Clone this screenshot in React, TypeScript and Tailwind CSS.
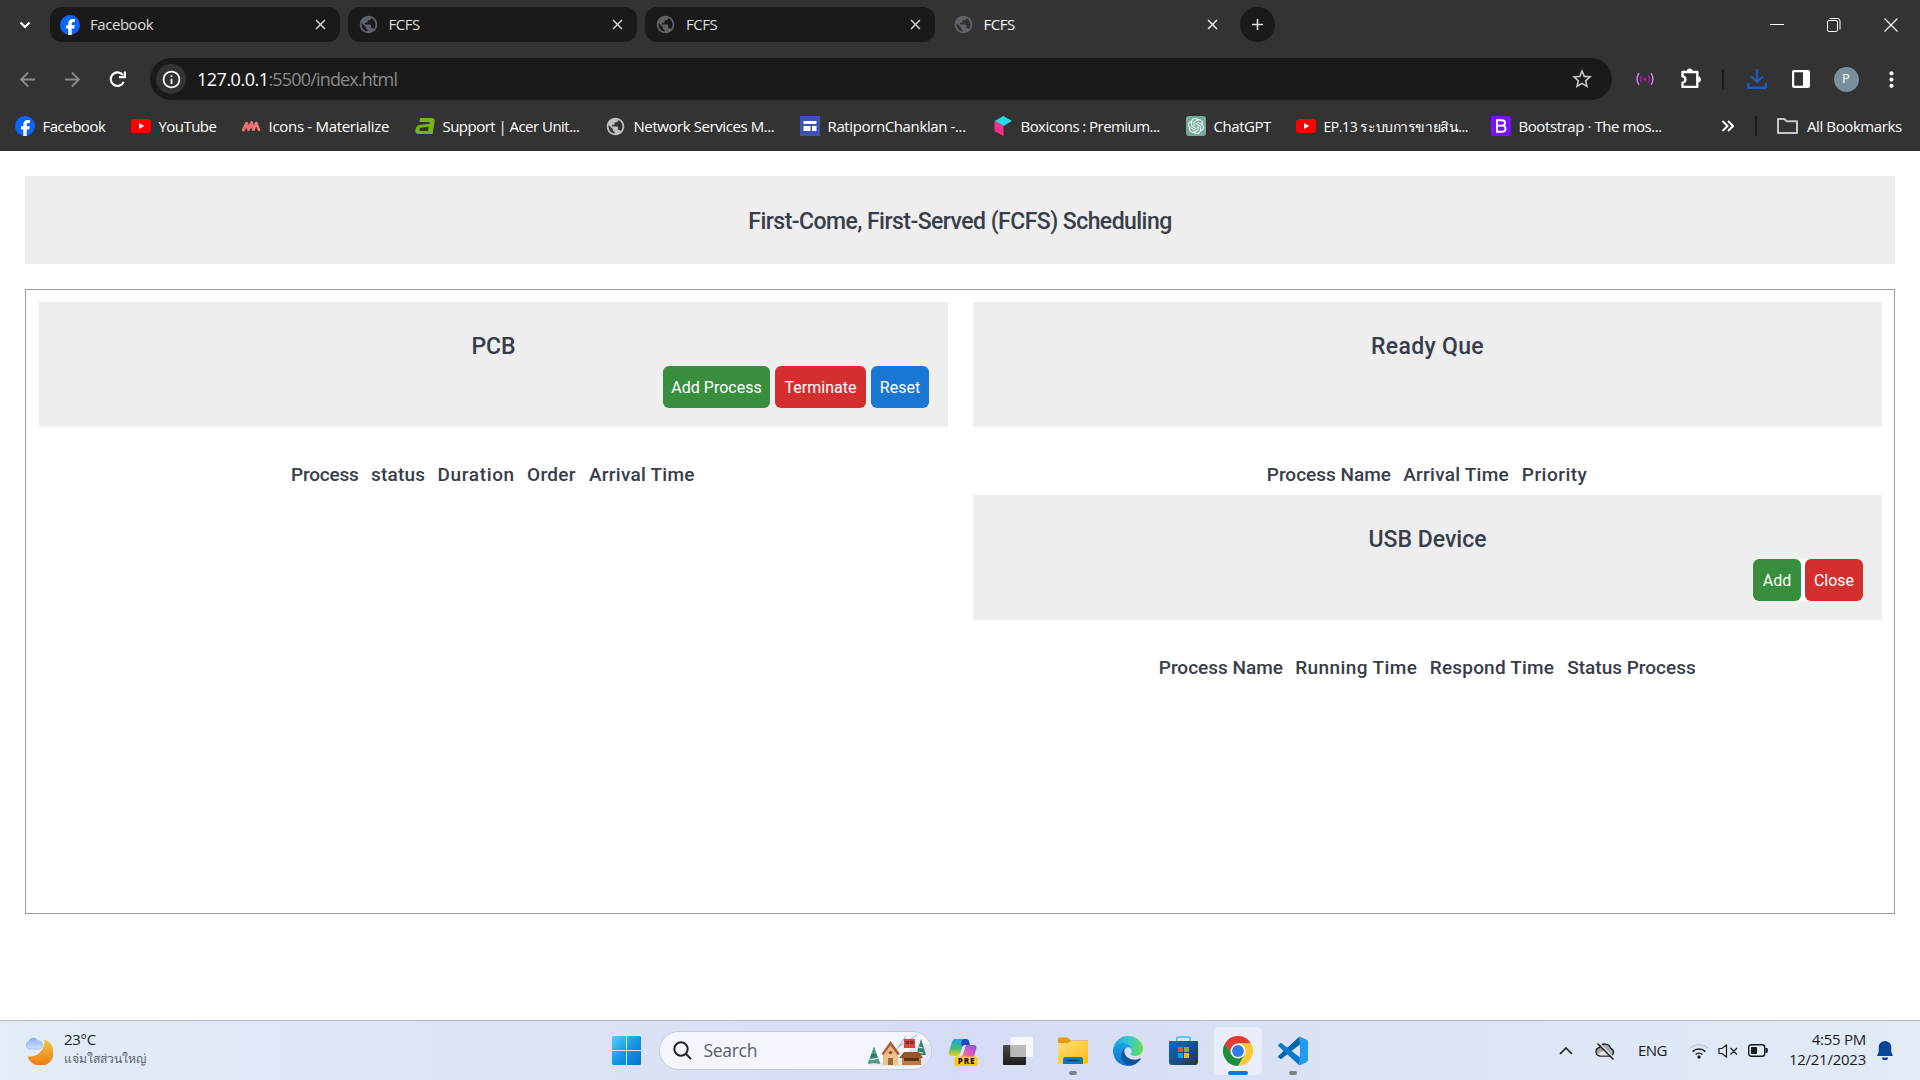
import React from "react";
import {
  MdPublic,
  MdStarOutline,
  MdArrowBack,
  MdArrowForward,
  MdOutlineInfo,
  MdMoreVert,
  MdClose,
  MdAdd,
} from "react-icons/md";
import { FaFacebook } from "react-icons/fa";
import { SiOpenai } from "react-icons/si";

/* ---------- small site icons ---------- */

const FacebookIcon = () => (
  <span className="flex size-5 items-center justify-center rounded-full bg-[#0866ff]">
    <svg viewBox="0 0 20 20" className="size-5">
      <path
        d="M8.300 20v-6.600H6.100v-3.100h2.200V8.700c0-3.300 1.500-4.800 4.600-4.800.6 0 1.600.1 2 .2v2.800h-1.100c-1.600 0-2.100.6-2.100 2v1.400h3.100l-.6 3.100h-2.500V20z"
        fill="#fff"
      />
    </svg>
  </span>
);

const YouTubeIcon = () => (
  <svg viewBox="0 0 20 20" className="size-5">
    <rect x="0" y="3" width="20" height="14" rx="3.600" fill="#f00" />
    <path d="M8 7l5.200 3L8 13z" fill="#fff" />
  </svg>
);

const MaterializeIcon = () => (
  <svg viewBox="0 0 20 20" className="size-5" fill="none" strokeLinecap="round" strokeLinejoin="round">
    <path d="M2.400 14L5.600 7.200 7.400 13.500 10.600 6.600 12.500 13.500" stroke="#ee6e73" strokeWidth="3" />
    <path d="M12.500 13.500L15.200 7l2.800 6.800" stroke="#ef7c80" strokeWidth="2.600" />
  </svg>
);

const AcerIcon = () => (
  <svg viewBox="0 0 20 20" className="size-5">
    <path
      d="M5.200 2h11.500c2.300 0 3.400 1.300 3 3.600L17.500 18H4.200C1 18 0 16.600.4 14.200c.5-3.300 2-5.100 5.800-5.500l8.500-.9c.3-1.300 0-1.800-1.300-1.800H4.400zM13.800 10.700l-7 .8c-1.700.2-2.200.9-2.400 2.100-.1.900.3 1.300 1.300 1.300H13z"
      fill="#77b41a"
    />
  </svg>
);

const GoogleSitesIcon = () => (
  <svg viewBox="0 0 20 20" className="size-5">
    <rect width="20" height="20" fill="#3f51b5" />
    <path d="M3.500 5h13v3h-13zM3.500 10h7v5h-7zM12 10h4.500v5H12z" fill="#fff" />
  </svg>
);

const BoxiconsIcon = () => (
  <svg viewBox="0 0 20 20" className="size-5">
    <path d="M1.500 5L10.500 0 19 5l-8.500 5z" fill="#24d8e6" />
    <path d="M1.500 5l9 5v10l-9-5z" fill="#ff2e8a" />
  </svg>
);

const ChatGPTIcon = () => (
  <span className="flex size-5 items-center justify-center rounded-[3px] bg-[#74aa9c]">
    <SiOpenai className="size-4 text-white" />
  </span>
);

const BootstrapIcon = () => (
  <svg viewBox="0 0 20 20" className="size-5">
    <rect width="20" height="20" rx="2" fill="#7a12f9" />
    <path
      d="M6 4.200h4.800c2.100 0 3.300 1 3.300 2.700 0 1.400-.8 2.300-2 2.700 1.600.3 2.400 1.400 2.400 2.900 0 2.100-1.400 3.300-3.800 3.300H6z"
      fill="none"
      stroke="#fff"
      strokeWidth="1.900"
    />
    <path d="M6 9.700h5.500" stroke="#fff" strokeWidth="1.900" />
  </svg>
);

/* ---------- browser chrome ---------- */

function Tab({ icon, title, active = false }: { icon: React.ReactNode; title: string; active?: boolean }) {
  return (
    <div
      className={`flex h-[35px] w-[289.5px] shrink-0 items-center rounded-[12px] pr-[11px] pl-2.5 ${
        active ? "text-[#f4f4f4]" : "bg-[#1a1a1a] text-[#dcdcdc]"
      }`}
    >
      {icon}
      <span className="ml-[10px] flex-1 text-[15px] tracking-[-0.45px]">{title}</span>
      <MdClose className="size-[17px]" />
    </div>
  );
}

const globe = <MdPublic className="size-[21px] text-[#5f6368]" />;

function TabStrip() {
  return (
    <div className="flex h-[49px] items-center">
      <svg viewBox="0 0 12 12" className="ml-[19px] size-3" fill="none" stroke="#fff" strokeWidth="2.200">
        <path d="M1.500 3.500L6 8l4.500-4.500" />
      </svg>
      <div className="ml-[19px] flex gap-2">
        <Tab icon={<FacebookIcon />} title="Facebook" />
        <Tab icon={globe} title="FCFS" />
        <Tab icon={globe} title="FCFS" />
        <Tab icon={globe} title="FCFS" active />
      </div>
      <div className="ml-[8px] flex size-[35px] items-center justify-center rounded-full bg-[#1a1a1a]">
        <MdAdd className="size-[19px] text-[#e3e3e3]" />
      </div>
      <div className="mr-[22px] ml-auto flex items-center gap-[43px]">
        <span className="h-px w-3.5 bg-white" />
        <svg viewBox="0 0 14 14" className="size-3.5" fill="none" stroke="#fff">
          <rect x="0.500" y="2.500" width="10" height="11" rx="1.500" />
          <path d="M2.500.5h8a2.500 2.500 0 012.500 2.500v8.500" />
        </svg>
        <svg viewBox="0 0 14 14" className="size-3.5" stroke="#fff" strokeWidth="1.100">
          <path d="M.5.5l13 13M13.500.5l-13 13" />
        </svg>
      </div>
    </div>
  );
}

function Toolbar() {
  return (
    <div className="flex h-[60px] items-center pl-[16px] text-white">
      <MdArrowBack className="size-[23px] text-[#8a8a8a]" />
      <MdArrowForward className="ml-[22px] size-[23px] text-[#8a8a8a]" />
      <svg viewBox="0 0 18 18" className="mr-[24px] ml-[25px] size-[17px]" fill="none" stroke="#fff" strokeWidth="2.300">
        <path d="M15.600 11.500A7.200 7.200 0 1114.800 4.300" />
        <path d="M16.800.5v6h-6.300" />
      </svg>
      <div className="flex h-[42px] w-[1462px] items-center rounded-full bg-[#1a1a1a] pr-[18px] pl-[6px]">
        <span className="flex size-[30px] items-center justify-center rounded-full bg-[#333]">
          <MdOutlineInfo className="size-[21px]" />
        </span>
        <span className="ml-[11px] flex-1 text-[18px] tracking-[-0.83px] text-[#8a8a8a]">
          <span className="tracking-[-0.5px] text-white">127.0.0.1</span>:5500/index.html
        </span>
        <MdStarOutline className="size-6 text-[#c7c7c7]" />
      </div>
      <svg viewBox="0 0 18 18" className="ml-[24px] size-[18px]" fill="none" strokeWidth="1.500">
        <circle cx="9" cy="9" r="1.700" fill="#a21caf" />
        <path d="M6 5.500c-1.700 2-1.700 5 0 7M12 5.500c1.700 2 1.700 5 0 7" stroke="#a21caf" />
        <path d="M3 3.200C.6 6.700.6 11.300 3 14.800M15 3.200c2.400 3.500 2.400 8.100 0 11.600" stroke="#d07fe0" />
      </svg>
      <svg viewBox="0 0 22 22" className="ml-[26px] h-[22px] w-[22px]">
        <path
          d="M2.500 4h14.800v14.900H2.500v-4.300l1.600-.6c1.700-.8 1.700-4.300 0-5.100l-1.600-.6z"
          fill="none"
          stroke="#fff"
          strokeWidth="2.400"
          strokeLinejoin="round"
        />
        <path d="M6.800 3.500a2.900 2.900 0 015.800 0zM18 8.600a2.900 2.900 0 010 5.800z" fill="#fff" />
      </svg>
      <span className="ml-[20px] h-5 w-0.5 rounded bg-[#1a1a1a]" />
      <svg
        viewBox="0 0 20 20"
        className="ml-[22.500px] size-5"
        fill="none"
        stroke="#1f5cb8"
        strokeWidth="2.400"
        strokeLinejoin="round"
      >
        <path d="M10 0v12.500M4.300 7.500l5.700 5.500 5.700-5.500M1.200 14v4.800h17.600V14" />
      </svg>
      <svg viewBox="0 0 18 18" className="ml-[25px] size-[18px]">
        <rect x="1.100" y="1.100" width="15.800" height="15.800" rx="1" fill="none" stroke="#fff" strokeWidth="2.200" />
        <path d="M11 1h6v16h-6z" fill="#fff" />
      </svg>
      <span className="ml-[24px] flex size-[25px] items-center justify-center rounded-full bg-[#78909c] text-[13px]">
        P
      </span>
      <MdMoreVert className="ml-[20px] size-[25px]" />
    </div>
  );
}

const bookmarks = [
  { icon: <FacebookIcon />, label: "Facebook", box: "w-[116px]", text: "tracking-[-0.5px]" },
  { icon: <YouTubeIcon />, label: "YouTube", box: "w-[110px]", text: "tracking-[-0.55px]" },
  { icon: <MaterializeIcon />, label: "Icons - Materialize", box: "w-[174px]", text: "tracking-[-0.3px]" },
  { icon: <AcerIcon />, label: "Support | Acer Unit...", box: "w-[190px]", text: "tracking-[-0.53px]" },
  {
    icon: <MdPublic className="size-[21px] text-[#bdc1c6]" />,
    label: "Network Services M...",
    box: "w-[195px]",
    text: "tracking-[-0.42px]",
  },
  { icon: <GoogleSitesIcon />, label: "RatipornChanklan -...", box: "w-[193px]", text: "tracking-[-0.38px]" },
  { icon: <BoxiconsIcon />, label: "Boxicons : Premium...", box: "w-[193px]", text: "tracking-[-0.55px]" },
  { icon: <ChatGPTIcon />, label: "ChatGPT", box: "w-[110px]", text: "tracking-[-0.45px]" },
  { icon: <YouTubeIcon />, label: "EP.13 ระบบการขายสิน...", box: "w-[195px]", text: "text-[14px] tracking-[-0.43px]" },
  { icon: <BootstrapIcon />, label: "Bootstrap · The mos...", box: "w-[230px]", text: "tracking-[-0.42px]" },
];

function BookmarksBar() {
  return (
    <div className="flex h-[42px] items-center pb-[8px] pl-[15px] text-[15px] whitespace-nowrap text-white">
      {bookmarks.map((b) => (
        <div key={b.label} className={`flex shrink-0 items-center gap-[7.500px] ${b.box}`}>
          <span className="shrink-0">{b.icon}</span>
          <span className={b.text}>{b.label}</span>
        </div>
      ))}
      <svg viewBox="0 0 13 12" className="h-3 w-[13px]" fill="none" stroke="#fff" strokeWidth="2">
        <path d="M1.500 1l5 5-5 5M7 1l5 5-5 5" />
      </svg>
      <span className="ml-[21px] h-5 w-0.5 bg-[#1a1a1a]" />
      <svg
        viewBox="0 0 21 16"
        className="ml-[20px] h-4 w-[21px]"
        fill="none"
        stroke="#c7c7c7"
        strokeWidth="2"
        strokeLinejoin="round"
      >
        <path d="M1 1h6.500l2 2.200H20V15H1z" />
      </svg>
      <span className="ml-[9px] tracking-[-0.4px]">All Bookmarks</span>
    </div>
  );
}

/* ---------- FCFS page ---------- */

function ActionButton({ label, className }: { label: string; className: string }) {
  return (
    <button
      className={`h-[42px] rounded-[6px] pt-0.5 text-center text-[16px] font-normal whitespace-nowrap text-white ${className}`}
    >
      {label}
    </button>
  );
}

function PanelHeader({ title, className = "", children }: { title: string; className?: string; children?: React.ReactNode }) {
  return (
    <div className="flex h-[125px] flex-col bg-[#eee] px-[19px] pt-[30px]">
      <h2 className={`text-center text-[23px] leading-[30px] font-medium ${className}`}>{title}</h2>
      <div className="mt-1 flex justify-end">{children}</div>
    </div>
  );
}

type Column = { label: string; className: string };

function HeaderRow({ columns }: { columns: Column[] }) {
  return (
    <div className="mt-[33px] flex justify-center gap-[12.500px] pr-px text-[19px] leading-[30px] font-medium whitespace-nowrap">
      {columns.map((c) => (
        <span key={c.label} className={c.className}>
          {c.label}
        </span>
      ))}
    </div>
  );
}

const pcbColumns: Column[] = [
  { label: "Process", className: "w-[67.500px] tracking-[-0.2px]" },
  { label: "status", className: "w-[54px] tracking-[0.2px]" },
  { label: "Duration", className: "w-[77px] tracking-[0.65px]" },
  { label: "Order", className: "w-[49.500px] tracking-[0.3px]" },
  { label: "Arrival Time", className: "w-[106px] tracking-[0.25px]" },
];

const readyColumns: Column[] = [
  { label: "Process Name", className: "w-[124px]" },
  { label: "Arrival Time", className: "w-[106px] tracking-[0.25px]" },
  { label: "Priority", className: "w-[65.500px] tracking-[0.5px]" },
];

const usbColumns: Column[] = [
  { label: "Process Name", className: "w-[124px]" },
  { label: "Running Time", className: "w-[122px] tracking-[0.4px]" },
  { label: "Respond Time", className: "w-[125px] tracking-[0.2px]" },
  { label: "Status Process", className: "w-[128px]" },
];

function SchedulerPage() {
  return (
    <main className="h-[869px] bg-white px-[25px] pt-[25px] font-['Roboto',sans-serif] text-[#373d49]">
      <header className="flex h-[88px] items-center justify-center bg-[#eee] pt-1">
        <h1 className="text-[23px] font-medium tracking-[-0.55px]">First-Come, First-Served (FCFS) Scheduling</h1>
      </header>
      <section className="mt-[25px] grid h-[625px] grid-cols-2 content-start gap-[25px] border border-[#9e9e9e] p-3 pl-[13px]">
        <div>
          <PanelHeader title="PCB">
            <ActionButton label="Add Process" className="w-[107px] bg-[#388e3c]" />
            <ActionButton label="Terminate" className="ml-[5px] w-[91px] bg-[#d32f2f]" />
            <ActionButton label="Reset" className="ml-[5px] w-[58px] bg-[#1976d2]" />
          </PanelHeader>
          <HeaderRow columns={pcbColumns} />
        </div>
        <div>
          <PanelHeader title="Ready Que" className="tracking-[0.3px]" />
          <HeaderRow columns={readyColumns} />
          <div className="mt-[5px]">
            <PanelHeader title="USB Device">
              <div className="flex bg-white">
                <ActionButton label="Add" className="w-[48px] bg-[#388e3c]" />
                <ActionButton label="Close" className="ml-[4px] w-[58px] bg-[#d32f2f]" />
              </div>
            </PanelHeader>
          </div>
          <HeaderRow columns={usbColumns} />
        </div>
      </section>
    </main>
  );
}

/* ---------- taskbar ---------- */

const WeatherIcon = () => (
  <svg viewBox="0 0 28 28" className="size-7">
    <defs>
      <linearGradient id="moon" x1="0" y1="0" x2="0" y2="1">
        <stop offset="0" stopColor="#f5c43c" />
        <stop offset="1" stopColor="#ee7a16" />
      </linearGradient>
      <linearGradient id="cloud" x1="0" y1="0" x2="0" y2="1">
        <stop offset="0" stopColor="#8fb2ee" />
        <stop offset="1" stopColor="#cfe0fb" />
      </linearGradient>
    </defs>
    <path d="M19.500 2.500A13.500 13.500 0 112.500 19.500C12 20.500 20 14 19.500 2.500z" fill="url(#moon)" />
    <path
      d="M4 12a4 4 0 01-.3-7.500 5 5 0 019.200-.8A4.200 4.200 0 0114 12z"
      fill="url(#cloud)"
      stroke="#86a9e6"
      strokeWidth=".6"
    />
  </svg>
);

const StartIcon = () => (
  <svg viewBox="0 0 29 29" className="size-[29px]">
    <defs>
      <linearGradient id="win" x1="0" y1="0" x2="1" y2="1">
        <stop offset="0" stopColor="#52d2fb" />
        <stop offset=".5" stopColor="#1797e3" />
        <stop offset="1" stopColor="#0571d0" />
      </linearGradient>
    </defs>
    <path d="M1 0h13v14H0V1zM15 0h13l1 1v13H15zM0 15h14v14H1l-1-1zM15 15h14v13l-1 1H15z" fill="url(#win)" />
  </svg>
);

const VillageArt = () => (
  <svg viewBox="0 0 64 38" className="h-[38px] w-16">
    <path d="M2 33c12-4 18-2 28-4 12-12 20-17 34-17v20c-6 3-50 3-62 1z" fill="#e3e5f1" />
    <path d="M28 20L39 4M33 14L50 3" stroke="#8b93a8" strokeWidth=".8" />
    <path d="M7 15l6 16H1z" fill="#2f7d64" />
    <path d="M7 15l2.500 7h-5zM3 27l4-2 4 2 2 5c-4-1-8-1-12 0z" fill="#4f9e80" />
    <path d="M2.500 27c3 1 6 0 8.500-1" stroke="#e8f4f4" strokeWidth="1.300" fill="none" />
    <path d="M54 7l5 16H49z" fill="#37806b" />
    <path d="M51.500 15l4 1M50 20l6 1" stroke="#e8f4f4" strokeWidth="1.200" />
    <path d="M16 20h15v13H16z" fill="#ecc487" />
    <path d="M14.500 22L23.500 9 33 22l-2.500 1-7-9-7 9z" fill="#b0563f" />
    <path d="M23.500 13.500l6.500 9H17z" fill="#e9b877" />
    <path d="M21 26h5v7h-5z" fill="#9c6a3a" />
    <circle cx="23.500" cy="20.500" r="1.600" fill="#7b4b2f" />
    <path d="M37 7h11v9H37z" fill="#d94637" />
    <path d="M38.500 9H42v3h-3.500zM43 9h3.500v3H43z" fill="#7c2f33" />
    <path d="M35 25h19v8H35z" fill="#c17c3d" />
    <path d="M32 26l5-6h15l4 6z" fill="#96562b" />
    <path d="M37 26h15v3H37z" fill="#5d321c" />
  </svg>
);

const CopilotIcon = () => (
  <svg viewBox="0 0 30 30" className="size-[30px]">
    <defs>
      <linearGradient id="copA" x1="0" y1="0" x2="0" y2="1">
        <stop offset="0" stopColor="#1ba4ee" />
        <stop offset=".55" stopColor="#3ebd7a" />
        <stop offset="1" stopColor="#f5d21c" />
      </linearGradient>
      <linearGradient id="copB" x1="1" y1="0" x2="0" y2="1">
        <stop offset="0" stopColor="#8a4df0" />
        <stop offset=".5" stopColor="#d35bc4" />
        <stop offset="1" stopColor="#fb8a5c" />
      </linearGradient>
    </defs>
    <path d="M7 3h12l-3 7-5 10H3c-2 0-3-1.500-2-4L4 6c.7-2 1.500-3 3-3z" fill="url(#copA)" />
    <path d="M16 3h2c2 0 2.800 1 3.200 3L22 9h-4c-2 0-3 .5-3.500 2L13 8c.6-2 .8-5 3-5z" fill="#174ec4" />
    <path d="M18 9h8c2 0 2.800 1.500 2.200 4l-1.700 6c-.5 1.500-1 2-2.500 2H12c2 0 2.500-1 3-2.500l2.500-8z" fill="url(#copB)" />
    <path d="M14.500 10.500c.5-1 1.500-1.500 3-1.500L14 19c-.5 1-1 1.500-2.500 1.500z" fill="#e4e0f8" />
    <rect x="6.500" y="20.500" width="23" height="9.500" rx="2" fill="#ffc90e" />
    <text x="9.800" y="28.200" fontFamily="Open Sans" fontSize="8" fontWeight="800" textLength="16.500" fill="#1b1b1b">
      PRE
    </text>
  </svg>
);

const TaskViewIcon = () => (
  <svg viewBox="0 0 30 28" className="h-7 w-[30px]">
    <defs>
      <linearGradient id="tv" x1="0" y1="0" x2="0" y2="1">
        <stop offset="0" stopColor="#4a4a4a" />
        <stop offset="1" stopColor="#1c1c1c" />
      </linearGradient>
    </defs>
    <rect x="0" y="8" width="23" height="20" rx="1" fill="url(#tv)" />
    <rect x="7.500" y="0" width="22.500" height="20" rx="1" fill="#fff" fillOpacity=".8" />
    <path d="M7.500 8H23v12H7.500z" fill="#b9b9b9" />
  </svg>
);

const ExplorerIcon = () => (
  <svg viewBox="0 0 30 28" className="h-7 w-[30px]">
    <defs>
      <linearGradient id="folder" x1="0" y1="0" x2="1" y2="1">
        <stop offset="0" stopColor="#ffe07a" />
        <stop offset="1" stopColor="#fbb915" />
      </linearGradient>
    </defs>
    <path d="M0 2C0 1 .7.500 1.500.500h8L13 3.500h16c.7 0 1 .5 1 1V10H0z" fill="#dfa00f" />
    <path d="M0 6h10l3-2h17v21c0 1-.5 1.500-1.500 1.500h-27C.5 26.500 0 26 0 25z" fill="url(#folder)" />
    <path d="M5 27v-4.500C5 21 6 20 7.500 20h15c1.500 0 2.500 1 2.500 2.500V27z" fill="#0f74c8" />
    <path d="M9 23.500h12" stroke="#083f77" strokeWidth="1.400" strokeLinecap="round" />
  </svg>
);

const EdgeIcon = () => (
  <svg viewBox="0 0 256 256" className="size-[30px]">
    <defs>
      <linearGradient id="e1" x1=".2" y1=".7" x2="1" y2=".7">
        <stop offset="0" stopColor="#0c59a4" />
        <stop offset="1" stopColor="#114a8b" />
      </linearGradient>
      <linearGradient id="e2" x1=".6" y1=".2" x2=".3" y2="1">
        <stop offset="0" stopColor="#1b9de2" />
        <stop offset="1" stopColor="#0a78cf" />
      </linearGradient>
      <linearGradient id="e3" x1="0" y1=".4" x2="1" y2=".5">
        <stop offset="0" stopColor="#2aa7e6" />
        <stop offset=".5" stopColor="#35c6d4" />
        <stop offset="1" stopColor="#66e04f" />
      </linearGradient>
    </defs>
    <path
      d="M231 190.500c-3.400 1.800-6.900 3.300-10.500 4.700a101.700 101.700 0 01-35.900 6.400c-47.300 0-88.500-32.500-88.500-74.300a31.500 31.500 0 0116.400-27.300c-42.800 1.800-53.800 46.400-53.800 72.500 0 73.900 68.100 81.400 82.800 81.400 7.900 0 19.800-2.300 27-4.600l1.300-.4a128.300 128.300 0 0066.600-52.800 4 4 0 00-5.400-5.600z"
      fill="url(#e1)"
    />
    <path
      d="M105.700 241.400a79.200 79.200 0 01-22.700-21.300 80.700 80.700 0 0129.500-120c3.200-1.500 8.500-4.100 15.600-4a32.400 32.400 0 0125.700 13 31.900 31.900 0 016.300 18.700c0-.2 24.500-79.600-80-79.600-43.900 0-80 41.700-80 78.200a130.200 130.200 0 0012.100 56 128 128 0 00156.400 67 75.500 75.500 0 01-62.800-8z"
      fill="url(#e2)"
    />
    <path
      d="M152.300 148.900c-.9 1-3.400 2.500-3.400 5.600 0 2.600 1.700 5.200 4.800 7.300 14.300 10 41.400 8.600 41.500 8.600a59.600 59.600 0 0030.300-8.300 61.400 61.400 0 0030.400-52.900c.3-22.400-8-37.300-11.300-43.900C223.500 23.900 177.700 0 128 0A128 128 0 000 126.200c.5-36.500 36.800-66 80-66 3.500 0 23.500.3 42 10a72.600 72.600 0 0130.900 29.300c6.100 10.600 7.200 24.100 7.200 29.500 0 5.400-2.700 13.300-7.800 19.900z"
      fill="url(#e3)"
    />
  </svg>
);

const StoreIcon = () => (
  <svg viewBox="0 0 29 29" className="size-[29px]">
    <defs>
      <linearGradient id="store" x1="0" y1="0" x2="1" y2="1">
        <stop offset="0" stopColor="#0a6cc4" />
        <stop offset="1" stopColor="#243454" />
      </linearGradient>
    </defs>
    <path
      d="M7.800 6V2.500c0-1 .6-1.500 1.500-1.500h10.400c.9 0 1.500.5 1.500 1.500V6"
      fill="none"
      stroke="#35c1f1"
      strokeWidth="1.600"
    />
    <path d="M0 5h29v21a3 3 0 01-3 3H3a3 3 0 01-3-3z" fill="url(#store)" />
    <path d="M9 11h5v5H9z" fill="#f25022" />
    <path d="M15 11h5v5h-5z" fill="#7fba00" />
    <path d="M9 17h5v5H9z" fill="#00a4ef" />
    <path d="M15 17h5v5h-5z" fill="#ffb900" />
  </svg>
);

const ChromeIcon = () => (
  <svg viewBox="0 0 48 48" className="size-[30px]">
    <path d="M24 12h20.800A24 24 0 003.200 12l10.400 18z" fill="#e33b2e" />
    <path d="M34.400 30L24 48A24 24 0 0044.800 12H24z" fill="#fcc934" />
    <path d="M13.600 30L3.200 12A24 24 0 0024 48l10.400-18z" fill="#1e8e3e" />
    <circle cx="24" cy="24" r="12" fill="#fff" />
    <circle cx="24" cy="24" r="9.500" fill="#2f7de9" />
  </svg>
);

const VSCodeIcon = () => (
  <svg viewBox="0 0 30 30" className="size-[30px]">
    <path d="M22 8.500L3.500 22.800c-.5.400-1 .4-1.500 0L.5 21.500c-.5-.5-.5-1.200 0-1.700L21.500.6z" fill="#0065a9" />
    <path d="M22 21.500L3.500 7.200c-.5-.4-1-.4-1.500 0L.5 8.500c-.5.500-.5 1.200 0 1.700l21 19.200z" fill="#007acc" />
    <path
      d="M21.500 29.500c-.6.300-1.200.2-1.700-.3 1 .9 2.200.3 2.200-.9V1.700c0-1.200-1.400-1.800-2.200-.9.500-.5 1.100-.6 1.700-.3l7.200 3.300c.8.400 1.300 1 1.300 1.900v18.600c0 .8-.5 1.500-1.300 1.900z"
      fill="#1f9cf0"
    />
  </svg>
);

function TaskItem({ children, state }: { children: React.ReactNode; state?: "open" | "active" }) {
  return (
    <div
      className={`relative flex size-12 items-center justify-center rounded-[5px] ${
        state === "active" ? "bg-[#eaeefa]" : ""
      }`}
    >
      {children}
      {state === "open" && <span className="absolute bottom-0 h-1 w-2 rounded-full bg-[#7d8088]" />}
      {state === "active" && <span className="absolute bottom-0 h-1 w-5 rounded-full bg-[#0a7ad8]" />}
    </div>
  );
}

function SystemTray() {
  return (
    <div className="ml-auto flex items-center text-[#1b1b1b]">
      <svg viewBox="0 0 14 8" className="h-2 w-3.5" fill="none" stroke="#1b1b1b" strokeWidth="1.600">
        <path d="M1 7l6-6 6 6" />
      </svg>
      <svg viewBox="0 0 20 18" className="ml-[22px] h-[18px] w-5">
        <path
          d="M5 14a4.300 4.300 0 01-.5-8.500 6 6 0 0111.200.8A4 4 0 0115.500 14z"
          fill="#a6a8ab"
          stroke="#1b1b1b"
          strokeWidth="1.300"
        />
        <path d="M2.500 12L9 8.500l8 4-1.500 1H5z" fill="#e6e8ea" />
        <path d="M3.500.5l16 16" stroke="#e3ecf7" strokeWidth="1.500" />
        <path d="M2.500 1.500l16 16" stroke="#1b1b1b" strokeWidth="1.500" />
      </svg>
      <span className="ml-[23px] w-[29px] text-[15px] tracking-[-0.6px]">ENG</span>
      <svg viewBox="0 0 20 16" className="ml-[22px] h-4 w-5" fill="none" strokeWidth="1.500">
        <path d="M.8 5.500a13 13 0 0118.400 0" stroke="#c3ccd6" />
        <path d="M3.600 8.600a9 9 0 0112.800 0M6.600 11.500a4.900 4.900 0 016.800 0" stroke="#1b1b1b" />
        <circle cx="10" cy="14" r="1.700" fill="#1b1b1b" />
      </svg>
      <svg viewBox="0 0 20 14" className="ml-[9px] h-3.5 w-5" fill="none" stroke="#1b1b1b" strokeWidth="1.200">
        <path d="M1 4.500h3L8.500 1v12L4 9.500H1zM12.500 4l6.500 6.500M19 4l-6.500 6.500" />
      </svg>
      <svg viewBox="0 0 20 13" className="ml-[10px] h-[13px] w-5">
        <rect x=".7" y=".7" width="16" height="11.600" rx="2.500" fill="none" stroke="#1b1b1b" strokeWidth="1.400" />
        <rect x="3" y="3" width="6" height="7" rx=".8" fill="#1b1b1b" />
        <path d="M17.500 4h1c.8 0 1.300.5 1.300 1.200v2.600c0 .7-.5 1.200-1.300 1.200h-1z" fill="#1b1b1b" />
      </svg>
      <div className="ml-[11px] w-[87px] pb-1 text-right text-[15px] leading-5 tracking-[-0.25px] whitespace-nowrap">
        <div>4:55 PM</div>
        <div>12/21/2023</div>
      </div>
      <svg viewBox="0 0 16 19" className="mr-[27px] ml-[11px] h-[19px] w-4" fill="#0a4595">
        <path d="M8 0a6.300 6.300 0 016.300 6.300V11l1.500 3.200c.2.500 0 .8-.5.800H.7c-.5 0-.7-.3-.5-.8L1.700 11V6.300A6.300 6.300 0 018 0zM5 16.500h6a3 3 0 01-6 0z" />
      </svg>
    </div>
  );
}

function Taskbar() {
  return (
    <footer className="flex h-[60px] items-center border-t border-[#aeb7c6] bg-linear-to-r from-[#e2edf7] via-[#d6dcf5] to-[#e2ecf6]">
      <div className="flex w-[612px] items-center pl-[25px]">
        <WeatherIcon />
        <div className="ml-[11px] pb-1 leading-5 whitespace-nowrap">
          <div className="text-[15px] tracking-[-0.3px] text-[#1b1b1b]">23°C</div>
          <div className="text-[12.200px] text-[#5c6168]">แจ่มใสส่วนใหญ่</div>
        </div>
      </div>
      <StartIcon />
      <div className="ml-[17.500px] flex h-[39px] w-[273px] items-center rounded-full border border-[#c3cadf] bg-[#f3f6fd] pl-[13px]">
        <svg viewBox="0 0 19 19" className="size-[19px]" fill="none" stroke="#222" strokeWidth="2">
          <circle cx="8" cy="8" r="6.700" />
          <path d="M12.800 12.800l5.300 5.300" />
        </svg>
        <span className="ml-[12px] text-[17.500px] tracking-[-0.3px] text-[#5b5e66]">Search</span>
        <span className="ml-auto overflow-hidden rounded-r-full">
          <VillageArt />
        </span>
      </div>
      <div className="ml-[7.500px] flex gap-[7px]">
        <TaskItem><CopilotIcon /></TaskItem>
        <TaskItem><TaskViewIcon /></TaskItem>
        <TaskItem state="open"><ExplorerIcon /></TaskItem>
        <TaskItem><EdgeIcon /></TaskItem>
        <TaskItem><StoreIcon /></TaskItem>
        <TaskItem state="active"><ChromeIcon /></TaskItem>
        <TaskItem state="open"><VSCodeIcon /></TaskItem>
      </div>
      <SystemTray />
    </footer>
  );
}

export default function App() {
  return (
    <div className="h-[1080px] w-[1920px] overflow-hidden bg-white font-['Open_Sans','Noto_Sans',sans-serif]">
      <div className="h-[151px] bg-[#333]">
        <TabStrip />
        <Toolbar />
        <BookmarksBar />
      </div>
      <SchedulerPage />
      <Taskbar />
    </div>
  );
}
